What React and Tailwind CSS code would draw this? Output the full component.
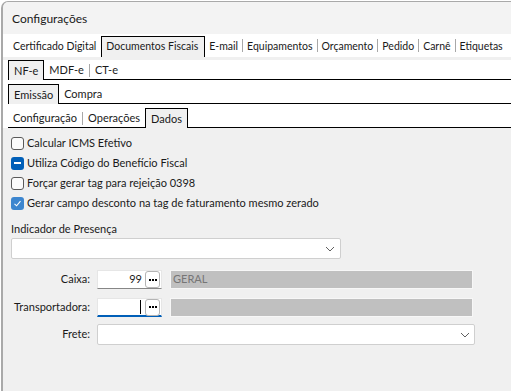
import React from "react";

const font = { fontFamily: 'Lato, "Noto Sans", "Liberation Sans", sans-serif' };

const Sep = () => <div className="w-px h-[13px] bg-[#a8a8a8] self-center shrink-0" />;

const Tab = ({ label, active }) =>
    active ? (
        <div className="h-full px-[5px] pt-[1px] flex items-center border border-b-0 border-black bg-[#f0f0f0] whitespace-nowrap">{label}</div>
    ) : (
        <div className="h-full px-[5px] pt-[2px] flex items-center whitespace-nowrap">{label}</div>
    );

const Strip = ({ tabs, active, top = 0 }) => (
    <div className="flex items-end bg-white pl-[5px] shrink-0" style={{ paddingTop: top }}>
        <div className="w-0 self-stretch border-b border-black" />
        {tabs.map((t, i) => {
            const isActive = i === active;
            const prevActive = i - 1 === active;
            return (
                <React.Fragment key={t}>
                    {i > 0 && !isActive && !prevActive && (
                        <div className="h-[20px] pt-[2px] flex items-center border-b border-black">
                            <Sep />
                        </div>
                    )}
                    <div className={`h-[20px] ${isActive ? "" : "border-b border-black"}`}>
                        <Tab label={t} active={isActive} />
                    </div>
                </React.Fragment>
            );
        })}
        <div className="flex-1 h-[20px] border-b border-black" />
    </div>
);

const Checkbox = ({ state, label }) => (
    <div className="h-5 flex items-center gap-[3px]">
        {state === "off" && <div className="w-[13px] h-[13px] rounded-[3px] border border-[#5a5a5a] bg-[#fbfbfb]" />}
        {state === "mixed" && (
            <div className="w-[13px] h-[13px] rounded-[3px] bg-[#005fb8] flex items-center justify-center">
                <div className="w-[7px] h-[1.5px] bg-white" />
            </div>
        )}
        {state === "on" && (
            <div className="w-[13px] h-[13px] rounded-[3px] bg-[#3d86cf] flex items-center justify-center">
                <svg width="9" height="9" viewBox="0 0 9 9" fill="none">
                    <path d="M1.5 4.8 L3.6 6.8 L7.5 2.2" stroke="white" strokeWidth="1.1" />
                </svg>
            </div>
        )}
        <span className="whitespace-nowrap">{label}</span>
    </div>
);

const Chevron = () => (
    <svg width="10" height="6" viewBox="0 0 10 6" fill="none">
        <path d="M1 1 L5 5 L9 1" stroke="#606060" strokeWidth="1" />
    </svg>
);

const Dots = () => (
    <div className="w-[15px] h-[17px] rounded-[3px] border border-[#b4b4b4] bg-white flex items-center justify-center gap-[1px]">
        <span className="w-[2px] h-[2px] bg-black" />
        <span className="w-[2px] h-[2px] bg-black" />
        <span className="w-[2px] h-[2px] bg-black" />
    </div>
);

const LookupRow = ({ label, value, desc, focused }) => (
    <div className="flex items-center h-[19px]">
        <div className="w-[79px] text-right whitespace-nowrap">{label}</div>
        <div
            className={`ml-[7px] w-[65px] h-[19px] bg-white border border-[#e6e6e6] flex items-center justify-end pr-[1px] ${
                focused ? "border-b-2 border-b-[#005fb8]" : "border-b-[#868686]"
            }`}
        >
            {focused && <div className="w-px h-[14px] bg-black mr-[4px]" />}
            {value && <span className="mr-[3px]">{value}</span>}
            <Dots />
        </div>
        <div className="ml-[8px] w-[303px] h-[19px] bg-[#c0c0c0] border border-[#f7f7f7] flex items-center pl-[2px] text-[#767676]">
            {desc}
        </div>
    </div>
);

export default function App() {
    return (
        <div className="w-[511px] h-[391px] bg-white overflow-hidden text-[11px] text-[#1a1a1a]" style={font}>
            <div className="ml-[1px] mt-[1px] w-[520px] h-[400px] flex flex-col bg-[#f0f0f0] border-l-2 border-t border-[#a9a9a9] rounded-tl-[7px] overflow-hidden">
                {/* Title bar */}
                <div className="h-[32px] shrink-0 bg-[#f3f3f3] flex items-center pl-[9px] pt-[2px] text-[12px]">Configurações</div>

                {/* Top tabs */}
                <div className="h-[23px] shrink-0 bg-white flex items-end pl-[5px] whitespace-nowrap text-[10.5px]">
                    <div className="h-[21px] flex items-center px-[5px]">Certificado Digital</div>
                    <div className="h-[21px] flex items-center pl-[4px] pr-[6px] border border-b-0 border-black bg-[#f0f0f0]">Documentos Fiscais</div>
                    <div className="h-[21px] flex items-center px-[4px]">E-mail</div>
                    <Sep />
                    <div className="h-[21px] flex items-center px-[4px]">Equipamentos</div>
                    <Sep />
                    <div className="h-[21px] flex items-center px-[4px]">Orçamento</div>
                    <Sep />
                    <div className="h-[21px] flex items-center px-[4px]">Pedido</div>
                    <Sep />
                    <div className="h-[21px] flex items-center px-[4px]">Carnê</div>
                    <Sep />
                    <div className="h-[21px] flex items-center px-[4px]">Etiquetas</div>
                </div>
                <div className="h-[3px] shrink-0" />

                <Strip tabs={["NF-e", "MDF-e", "CT-e"]} active={0} />
                <Strip tabs={["Emissão", "Compra"]} active={0} top={4} />
                <Strip tabs={["Configuração", "Operações", "Dados"]} active={2} top={4} />

                {/* Content */}
                <div className="pl-[8px] pt-[5px] flex flex-col">
                    <Checkbox state="off" label="Calcular ICMS Efetivo" />
                    <Checkbox state="mixed" label="Utiliza Código do Benefício Fiscal" />
                    <Checkbox state="off" label="Forçar gerar tag para rejeição 0398" />
                    <Checkbox state="on" label="Gerar campo desconto na tag de faturamento mesmo zerado" />

                    <div className="mt-[8px] h-4 flex items-center">Indicador de Presença</div>
                    <div className="mt-[1px] w-[330px] h-[21px] bg-white border border-[#cfcfcf] rounded-[2px] flex items-center justify-end pr-[5px]">
                        <Chevron />
                    </div>

                    <div className="mt-[11px] flex flex-col gap-[9px]">
                        <LookupRow label="Caixa:" value="99" desc="GERAL" />
                        <LookupRow label="Transportadora:" focused />
                    </div>

                    <div className="mt-[7px] flex items-center">
                        <div className="w-[79px] text-right">Frete:</div>
                        <div className="ml-[7px] w-[378px] h-[21px] bg-white border border-[#cfcfcf] rounded-[2px] flex items-center justify-end pr-[4px]">
                            <Chevron />
                        </div>
                    </div>
                </div>
            </div>
        </div>
    );
}
